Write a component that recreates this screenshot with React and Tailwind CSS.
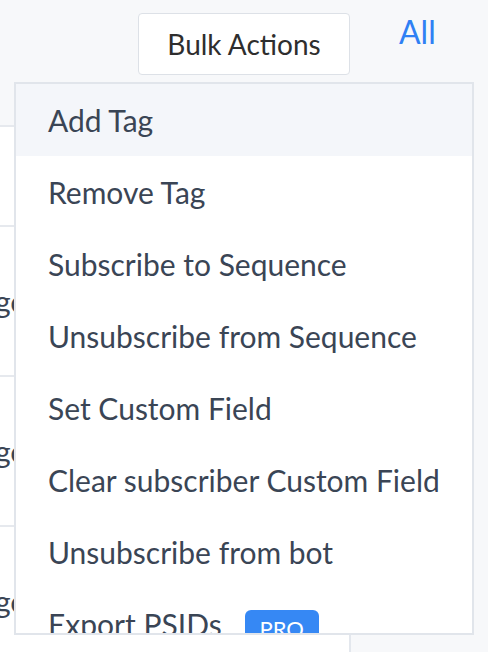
import React from "react";

const items = [
  "Add Tag",
  "Remove Tag",
  "Subscribe to Sequence",
  "Unsubscribe from Sequence",
  "Set Custom Field",
  "Clear subscriber Custom Field",
  "Unsubscribe from bot",
];

export default function App() {
  return (
    <div
      className="relative w-[488px] h-[652px] overflow-hidden bg-[#f7f8fa]"
      style={{ fontFamily: "Lato, 'Open Sans', sans-serif" }}
    >
      {/* top bar */}
      <div className="flex items-start h-[125px] pt-[13px] pl-[138px]">
        <button className="w-[212px] h-[62px] bg-white border border-[#dde1e7] rounded-[4px] text-[28px] text-[#2e2e2e] leading-none">
          Bulk Actions
        </button>
        <span className="ml-[49px] mt-[0px] text-[32px] leading-[38px] text-[#2f80f4]">All</span>
      </div>

      {/* background table */}
      <div className="w-[351px] bg-white border-r-2 border-[#e3e7ed] h-[527px]">
        <div className="h-[100px] border-t-2 border-[#e6e9ee]" />
        <div className="h-[150px] border-t-2 border-[#e6e9ee] flex items-center">
          <span className="ml-[-5px] text-[30px] text-[#3a4555]">go</span>
        </div>
        <div className="h-[150px] border-t-2 border-[#e6e9ee] flex items-center">
          <span className="ml-[-5px] text-[30px] text-[#3a4555]">go</span>
        </div>
        <div className="h-[150px] border-t-2 border-[#e6e9ee] flex items-center">
          <span className="ml-[-5px] text-[30px] text-[#3a4555]">go</span>
        </div>
      </div>

      {/* dropdown menu */}
      <div className="absolute left-[14px] top-[82px] w-[460px] h-[553px] bg-white border-2 border-[#e1e5eb] overflow-hidden">
        {items.map((t, i) => (
          <div
            key={t}
            className={
              i === 0
                ? "h-[72px] flex items-center pl-[32px] text-[30px] text-[#3a4555] bg-[#f4f6fa]"
                : "h-[72px] flex items-center pl-[32px] text-[30px] text-[#3a4555]"
            }
          >
            {t}
          </div>
        ))}
        <div className="h-[72px] flex items-center pl-[32px] text-[30px] text-[#3a4555]">
          <span>Export PSIDs</span>
          <span className="self-start mt-[22px] ml-[23px] h-[40px] w-[74px] flex items-start justify-center pt-[8px] leading-[22px] rounded-[6px] bg-[#3688f4] text-white text-[22px]">
            PRO
          </span>
        </div>
      </div>
    </div>
  );
}
